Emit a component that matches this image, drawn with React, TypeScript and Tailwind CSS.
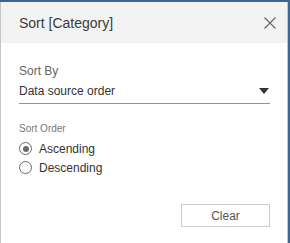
import { useState } from "react";

// Sort dialog: header, "Sort By" dropdown, order radios, Clear button

function CloseIcon() {
  return (
    <svg width="12" height="12" viewBox="0 0 12 12" className="block">
      <path d="M0.5 0.5 L11.5 11.5 M11.5 0.5 L0.5 11.5" stroke="#666" strokeWidth="1.1" fill="none" />
    </svg>
  );
}

function Radio({ checked }: { checked: boolean }) {
  return (
    <span className="w-[13px] h-[13px] rounded-full border border-[#6b6b6b] bg-white flex items-center justify-center flex-shrink-0">
      {checked && <span className="w-[6px] h-[6px] rounded-full bg-[#6b6b6b]" />}
    </span>
  );
}

export default function App() {
  const [order, setOrder] = useState<"asc" | "desc">("asc");

  return (
    <div className="w-[290px] h-[243px] overflow-hidden bg-[#3f6690] pt-[2px] font-['Liberation_Sans',Arial,sans-serif]">
      <div className="w-[288px] h-full bg-white border-x border-[#c6c6c6] flex flex-col">
        <div className="h-[41px] bg-[#f3f3f3] flex items-center justify-between pl-[18px] pr-[11px]">
          <span className="text-[14px] leading-[16px] text-[#3a3a3a]">Sort [Category]</span>
          <button className="p-0"><CloseIcon /></button>
        </div>

        <div className="pl-[18px] pr-[17px] pt-[21px]">
          <div className="text-[12px] leading-[14px] text-[#666]">Sort By</div>
          <div className="mt-[6px] flex items-center justify-between border-b border-[#3dbf94] pb-[5px]">
            <span className="text-[12px] leading-[14px] text-[#333]">Data source order</span>
            <svg width="10" height="6" viewBox="0 0 10 6" className="block mr-[1px]">
              <path d="M0 0 H10 L5 6 Z" fill="#333" />
            </svg>
          </div>

          <div className="mt-[19px] text-[10px] leading-[12px] text-[#777]">Sort Order</div>
          <div className="mt-[4px]">
            <label className="h-[19px] flex items-center gap-[7px] cursor-pointer" onClick={() => setOrder("asc")}>
              <Radio checked={order === "asc"} />
              <span className="text-[12px] leading-[14px] text-[#333]">Ascending</span>
            </label>
            <label className="h-[19px] flex items-center gap-[7px] cursor-pointer" onClick={() => setOrder("desc")}>
              <Radio checked={order === "desc"} />
              <span className="text-[12px] leading-[14px] text-[#333]">Descending</span>
            </label>
          </div>

          <div className="mt-[27px] flex justify-end">
            <button className="w-[89px] h-[23px] border border-[#cccccc] bg-white text-[12px] text-[#555]">Clear</button>
          </div>
        </div>
      </div>
    </div>
  );
}
